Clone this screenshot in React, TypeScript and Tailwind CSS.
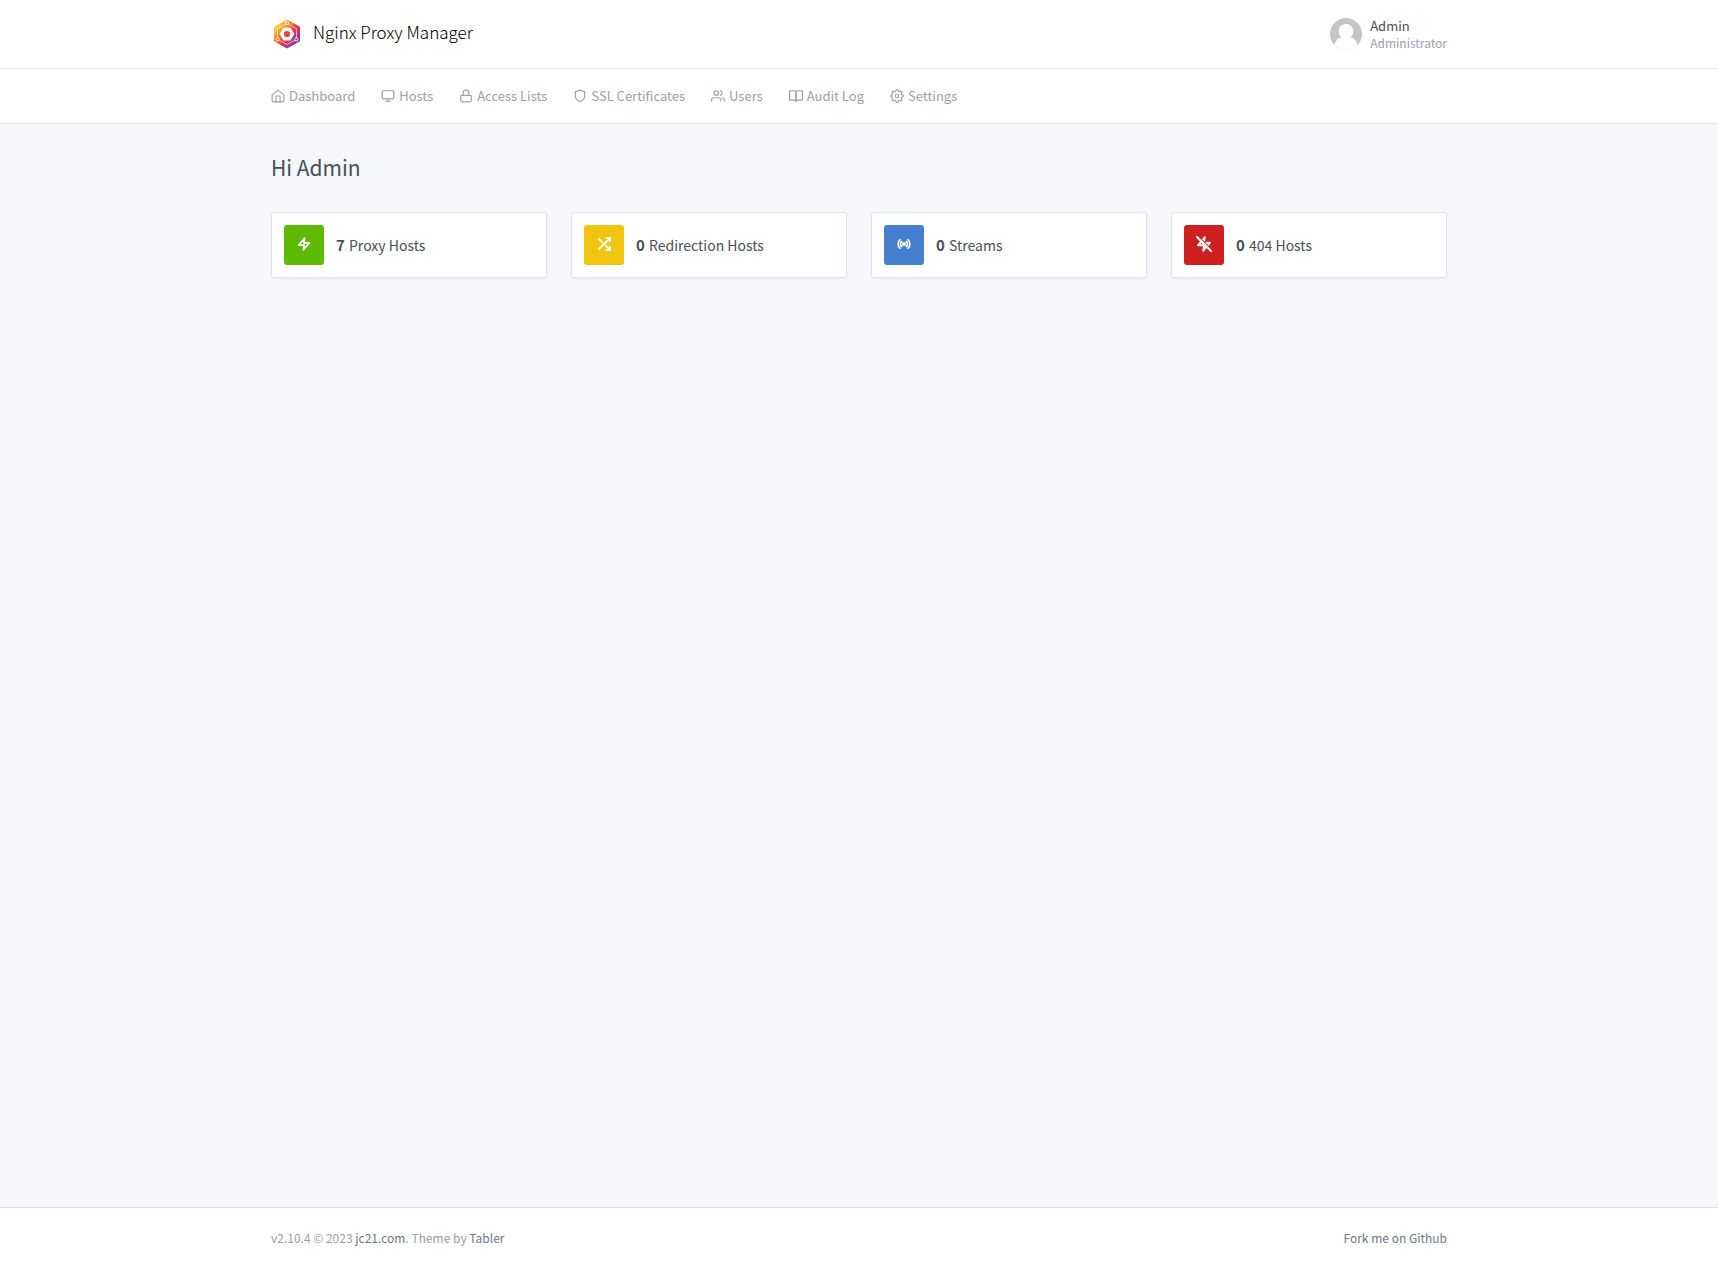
import type { ReactNode } from "react";
import { FiLock, FiMonitor, FiRadio, FiShield, FiShuffle, FiUsers, FiZap, FiZapOff } from "react-icons/fi";

function Stroke({ children }: { children: ReactNode }) {
  return (
    <svg
      width="14"
      height="14"
      viewBox="0 0 24 24"
      fill="none"
      stroke="currentColor"
      strokeWidth="2"
      strokeLinecap="round"
      strokeLinejoin="round"
      aria-hidden="true"
    >
      {children}
    </svg>
  );
}

function HomeIcon() {
  return (
    <Stroke>
      <path d="M2 10 12 2l10 8v10a2 2 0 0 1-2 2H4a2 2 0 0 1-2-2z" />
      <path d="M8.500 22V12h7v10" />
    </Stroke>
  );
}

function BookIcon() {
  return (
    <Stroke>
      <path d="M1 3h8a3 3 0 0 1 3 3v15a2 2 0 0 0-2-2H1z" />
      <path d="M23 3h-8a3 3 0 0 0-3 3v15a2 2 0 0 1 2-2h9z" />
    </Stroke>
  );
}

function GearIcon() {
  return (
    <Stroke>
      <circle cx="12" cy="12" r="3" />
      <path d="M19.4 15a1.650 1.650 0 0 0 .33 1.820l.06.06a2 2 0 1 1-2.830 2.830l-.06-.06a1.650 1.650 0 0 0-2.800 1.170V21a2 2 0 0 1-4 0v-.09A1.650 1.650 0 0 0 7.180 19.700l-.06.06a2 2 0 1 1-2.830-2.830l.06-.06A1.650 1.650 0 0 0 3.090 14H3a2 2 0 0 1 0-4h.09A1.650 1.650 0 0 0 4.350 7.180l-.06-.06a2 2 0 1 1 2.830-2.830l.06.06A1.650 1.650 0 0 0 10 3.090V3a2 2 0 0 1 4 0v.09a1.650 1.650 0 0 0 2.820 1.260l.06-.06a2 2 0 1 1 2.830 2.830l-.06.06A1.650 1.650 0 0 0 20.910 10H21a2 2 0 0 1 0 4h-.09a1.650 1.650 0 0 0-1.510 1z" />
    </Stroke>
  );
}

function Logo() {
  return (
    <svg width="32" height="32" viewBox="0 0 32 32" aria-hidden="true">
      <defs>
        <linearGradient id="hex" x1="4" y1="6" x2="27" y2="27" gradientUnits="userSpaceOnUse">
          <stop offset="0" stopColor="#fbe64a" />
          <stop offset="0.3" stopColor="#f99428" />
          <stop offset="0.55" stopColor="#ee3b3a" />
          <stop offset="0.78" stopColor="#b3318c" />
          <stop offset="1" stopColor="#6a35a0" />
        </linearGradient>
      </defs>
      <path d="M16 1.500 29 8.800v14.400L16 30.500 3 23.200V8.800z" fill="url(#hex)" />
      <path d="M16 5.500 25.500 10.700v10.600L16 26.500 6.500 21.300V10.700z" fill="none" stroke="#fff" strokeWidth="0.8" opacity="0.8" />
      <circle cx="16" cy="5" r="1.6" fill="#f58a3a" stroke="#fff" strokeWidth="1" />
      <circle cx="6.600" cy="21.500" r="1.6" fill="#f0703a" stroke="#fff" strokeWidth="1" />
      <circle cx="25.400" cy="21.500" r="1.6" fill="#9c3296" stroke="#fff" strokeWidth="1" />
      <path
        d="M13 10.500h6l3.200 5.500-3.200 5.500h-6L9.800 16z"
        fill="#fff"
        stroke="#fff"
        strokeWidth="2"
        strokeLinejoin="round"
      />
      <circle cx="16" cy="16" r="3.100" fill="#f0403c" />
    </svg>
  );
}

function Avatar() {
  return (
    <svg width="32" height="32" viewBox="0 0 32 32" aria-hidden="true">
      <defs>
        <clipPath id="face">
          <circle cx="16" cy="16" r="16" />
        </clipPath>
      </defs>
      <g clipPath="url(#face)">
        <path d="M0 0h32v32H0z" fill="#c5c5c5" />
        <path d="M16 6c4.600 0 7.200 3.200 7.200 7.200 0 2.600-1 4.700-2.700 6.100 3.800 1 6 3.500 7.500 8.700v4H4v-4c1.500-5.200 3.700-7.700 7.500-8.700-1.700-1.400-2.700-3.500-2.700-6.100C8.800 9.200 11.400 6 16 6z" fill="#fff" />
      </g>
    </svg>
  );
}

const nav = [
  { label: "Dashboard", icon: <HomeIcon /> },
  { label: "Hosts", icon: <FiMonitor size={14} /> },
  { label: "Access Lists", icon: <FiLock size={14} /> },
  { label: "SSL Certificates", icon: <FiShield size={14} /> },
  { label: "Users", icon: <FiUsers size={14} /> },
  { label: "Audit Log", icon: <BookIcon /> },
  { label: "Settings", icon: <GearIcon /> },
];

const cards = [
  { count: 7, label: "Proxy Hosts", color: "bg-[#5eba00]", icon: <FiZap size={14} strokeWidth={3} /> },
  { count: 0, label: "Redirection Hosts", color: "bg-[#f1c40f]", icon: <FiShuffle size={16} strokeWidth={3} /> },
  { count: 0, label: "Streams", color: "bg-[#467fcf]", icon: <FiRadio size={14} strokeWidth={3} /> },
  { count: 0, label: "404 Hosts", color: "bg-[#cd201f]", icon: <FiZapOff size={16} strokeWidth={3} /> },
];

const container = "mx-auto w-full max-w-[1200px] px-3";

export default function App() {
  return (
    <div className="flex min-h-screen flex-col bg-[#f5f7fb] font-['Noto_Sans_CJK_SC','Noto_Sans',sans-serif] text-[#495057]">
      <header className="border-b border-[#dee3ee] bg-white">
        <div className={`${container} flex h-[68px] items-center justify-between`}>
          <a href="#home" className="flex items-center gap-[10px] text-[17px] leading-6 text-black">
            <Logo />
            <span className="pb-1 font-light">Nginx Proxy Manager</span>
          </a>
          <button type="button" className="flex items-center gap-2 text-left">
            <Avatar />
            <span className="flex flex-col">
              <span className="text-[13px] leading-[18px]">Admin</span>
              <span className="text-xs leading-4 text-[#9aa0ac]">Administrator</span>
            </span>
          </button>
        </div>
      </header>
      <nav className="border-b border-[#dee3ee] bg-white">
        <ul className={`${container} flex h-[54px] items-center gap-[26px]`}>
          {nav.map((item) => (
            <li key={item.label}>
              <a href="#nav" className="flex items-center gap-1 text-[13px] leading-6 text-[#9aa0ac]">
                {item.icon}
                {item.label}
              </a>
            </li>
          ))}
        </ul>
      </nav>
      <main className={`${container} flex-1 pt-6`}>
        <h1 className="text-[21px] leading-[38px]">Hi Admin</h1>
        <div className="mt-[26px] grid grid-cols-1 gap-6 sm:grid-cols-2 lg:grid-cols-4">
          {cards.map((card) => (
            <a
              key={card.label}
              href="#hosts"
              className="flex items-center gap-3 rounded-[3px] border border-[#dee3ee] bg-white p-3 shadow-[0_1px_2px_0_rgba(0,0,0,0.05)]"
            >
              <span className={`${card.color} flex size-10 items-center justify-center rounded-[3px] pb-0.5 text-white`}>
                {card.icon}
              </span>
              <span className="text-sm leading-5">
                <b className="mr-px text-[15px]">{card.count}</b> {card.label}
              </span>
            </a>
          ))}
        </div>
      </main>
      <footer className="border-t border-[#dee3ee] bg-white">
        <div className={`${container} flex h-[61px] items-center justify-between pb-0.5 text-xs leading-5 text-[#9aa0ac]`}>
          <p>
            v2.10.4 © 2023{" "}
            <a href="#author" className="text-[#6e7687]">
              jc21.com
            </a>
            . Theme by{" "}
            <a href="#theme" className="text-[#6e7687]">
              Tabler
            </a>
          </p>
          <a href="#fork" className="text-[#6e7687]">
            Fork me on Github
          </a>
        </div>
      </footer>
    </div>
  );
}
